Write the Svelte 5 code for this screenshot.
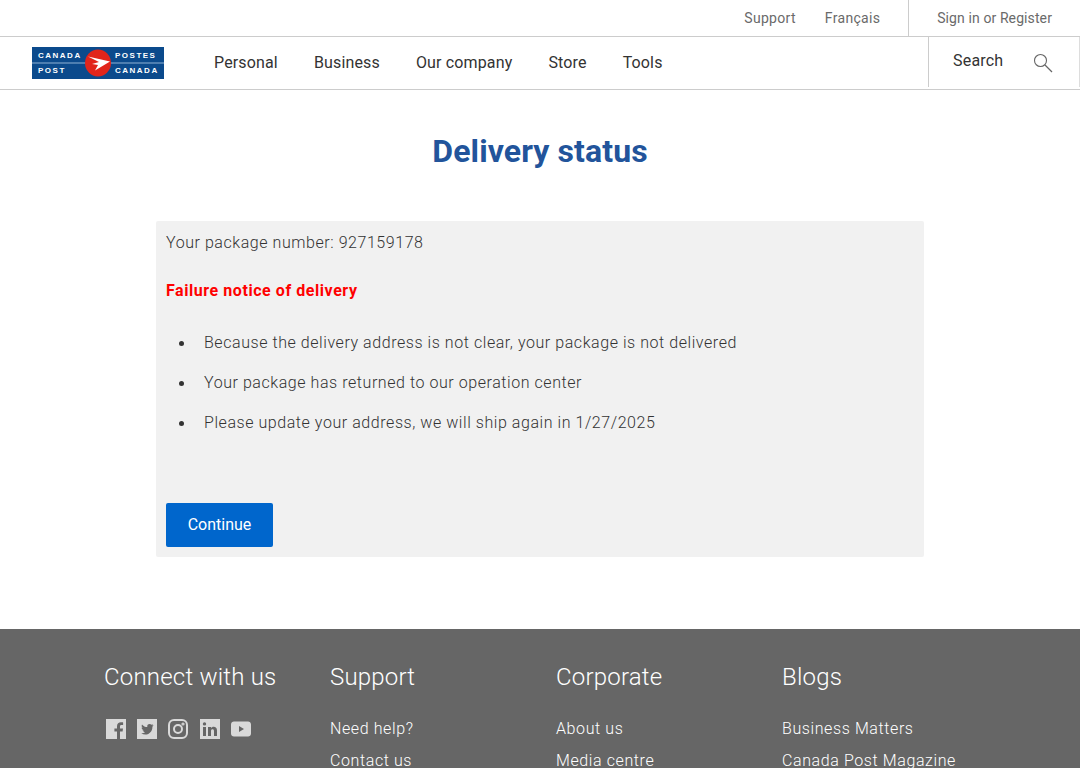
<script>
  const mainNav = ["Personal", "Business", "Our company", "Store", "Tools"];
  const notes = [
    "Because the delivery address is not clear, your package is not delivered",
    "Your package has returned to our operation center",
    "Please update your address, we will ship again in 1/27/2025"
  ];
  const columns = [
    { title: "Support", links: ["Need help?", "Contact us"] },
    { title: "Corporate", links: ["About us", "Media centre"] },
    { title: "Blogs", links: ["Business Matters", "Canada Post Magazine"] }
  ];
</script>

<div class="page">
  <div class="topbar">
    <a class="support" href="#top">Support</a>
    <a class="lang" href="#top">Français</a>
    <a class="signin" href="#top">Sign in or Register</a>
  </div>

  <header class="nav">
    <svg class="logo" width="132" height="32" viewBox="0 0 132 32">
      <rect width="132" height="32" fill="#0b4a8c" />
      <rect y="15.500" width="132" height="1" fill="#8fb2d3" />
      <g class="logo-text">
        <text x="6" y="11">CANADA</text>
        <text x="83" y="11">POSTES</text>
        <text x="6" y="26">POST</text>
        <text x="83" y="26">CANADA</text>
      </g>
      <ellipse cx="66" cy="16" rx="13" ry="13.500" fill="#e1251b" />
      <path d="M56 9.500 L78 14.500 L63 23.500 L66 18 L60 17 L67 15 Z" fill="#fff" />
    </svg>
    <nav class="links">
      {#each mainNav as item}
        <a href="#top">{item}</a>
      {/each}
    </nav>
    <div class="search">
      <span>Search</span>
      <svg width="20" height="20" viewBox="0 0 20 20" fill="none" stroke="#666">
        <circle cx="7.500" cy="7.500" r="6" stroke-width="1.100" />
        <path d="M12 12 L19 19" stroke-width="1.300" />
      </svg>
    </div>
  </header>

  <main>
    <h1>Delivery status</h1>
    <section class="card">
      <p class="number">Your package number: 927159178</p>
      <p class="failure">Failure notice of delivery</p>
      <ul>
        {#each notes as note}
          <li>{note}</li>
        {/each}
      </ul>
      <button>Continue</button>
    </section>
  </main>

  <footer>
    <div class="col">
      <h2>Connect with us</h2>
      <div class="social">
        <svg width="20" height="20" viewBox="0 0 20 20">
          <path fill="#d9d9d9" d="M0 0H20V20H14V12.500H16.600L17 9.500H14V7.600C14 6.700 14.300 6.100 15.500 6.100H17.100V3.400C16.800 3.400 15.900 3.300 14.900 3.300C12.700 3.300 11 4.700 11 7.300V9.500H8.400V12.500H11V20H0Z" />
        </svg>
        <svg width="20" height="20" viewBox="0 0 20 20">
          <path fill="#d9d9d9" d="M0 0H20V20H0Z" />
          <path fill="#666" d="M16.500 6.100C16 6.300 15.500 6.500 15 6.500C15.500 6.200 15.900 5.700 16.100 5.100C15.600 5.400 15.100 5.600 14.500 5.700C13.400 4.500 11.500 4.700 10.700 5.800C10.200 6.500 10.100 7.300 10.300 8.100C8.200 8 6.300 7 5 5.400C4.300 6.600 4.700 8.100 5.800 8.900C5.400 8.900 5 8.800 4.600 8.600C4.600 9.900 5.500 11 6.800 11.300C6.400 11.400 6 11.400 5.600 11.300C6 12.400 7 13.200 8.100 13.200C7 14.100 5.600 14.500 4.200 14.300C5.400 15.100 6.800 15.500 8.200 15.500C12.900 15.500 15.600 11.600 15.400 7.700C15.800 7.300 16.200 6.700 16.500 6.100Z" />
        </svg>
        <svg width="20" height="20" viewBox="0 0 20 20" fill="none" stroke="#d9d9d9" stroke-width="2">
          <rect x="1" y="1" width="18" height="18" rx="5" />
          <circle cx="10" cy="10" r="4" />
          <circle cx="15" cy="5" r="0.600" />
        </svg>
        <svg class="shift" width="20" height="20" viewBox="0 0 20 20">
          <path fill="#d9d9d9" fill-rule="evenodd" d="M0 0H20V20H0Z M3 8V17H6V8Z M4.500 3.200A1.700 1.700 0 1 0 4.500 6.600A1.700 1.700 0 1 0 4.500 3.200Z M8 8V17H11V12.200C11 10.900 11.600 10.300 12.500 10.300C13.400 10.300 14 10.900 14 12.200V17H17V11.600C17 9 15.600 7.800 13.700 7.800C12.400 7.800 11.500 8.400 11 9.200V8Z" />
        </svg>
        <svg width="20" height="20" viewBox="0 0 20 20">
          <path fill="#d9d9d9" fill-rule="evenodd" d="M3 2.500H17C18.700 2.500 20 3.800 20 5.500V14.500C20 16.200 18.700 17.500 17 17.500H3C1.300 17.500 0 16.200 0 14.500V5.500C0 3.800 1.300 2.500 3 2.500Z M8 7V13L13 10Z" />
        </svg>
      </div>
    </div>
    {#each columns as col}
      <div class="col">
        <h2>{col.title}</h2>
        <ul class="flinks">
          {#each col.links as link}
            <li><a href="#top">{link}</a></li>
          {/each}
        </ul>
      </div>
    {/each}
  </footer>
</div>

<style>
  :global(body) {
    margin: 0;
    background: #fff;
  }

  .page {
    height: 768px;
    overflow: hidden;
    font-family: Roboto, "Liberation Sans", sans-serif;
    color: #333;
  }

  a {
    color: inherit;
    text-decoration: none;
  }

  .topbar {
    height: 36px;
    display: flex;
    justify-content: flex-end;
    align-items: center;
    font-size: 14px;
    letter-spacing: 0.3px;
    color: #6a6a6a;
    border-bottom: 1px solid #ccc;
  }

  .lang {
    margin-left: 29px;
    padding-right: 28px;
  }

  .signin {
    height: 36px;
    line-height: 36px;
    letter-spacing: 0.1px;
    border-left: 1px solid #ccc;
    padding: 0 28px;
  }

  .nav {
    height: 52px;
    display: flex;
    align-items: center;
    border-bottom: 1px solid #ccc;
  }

  .logo {
    margin-left: 32px;
    flex: none;
  }

  .logo-text {
    font-family: "Liberation Sans", sans-serif;
    font-size: 8px;
    font-weight: 700;
    letter-spacing: 1.500px;
    fill: #fff;
  }

  .links {
    display: flex;
    gap: 36px;
    margin-left: 50px;
    margin-top: -1px;
    font-size: 16px;
    letter-spacing: 0.15px;
    color: #333;
  }

  .search {
    margin-left: auto;
    width: 152px;
    height: 50px;
    align-self: flex-start;
    box-sizing: border-box;
    border-left: 1px solid #ccc;
    border-right: 1px solid #ddd;
    display: flex;
    align-items: center;
    padding-left: 24px;
    font-size: 16px;
    letter-spacing: 0.2px;
  }

  .search svg {
    margin-left: 30px;
    margin-top: 1px;
  }

  .search span {
    margin-top: -3px;
  }

  main {
    height: 539px;
    box-sizing: border-box;
    padding-top: 40px;
  }

  h1 {
    margin: 0;
    font-size: 32px;
    line-height: 42px;
    font-weight: 700;
    letter-spacing: 0.1px;
    color: #22549b;
    text-align: center;
  }

  .card {
    width: 768px;
    height: 336px;
    box-sizing: border-box;
    margin: 49px auto 0;
    padding: 10px;
    background: #f1f1f1;
    border-radius: 2px;
    font-size: 16px;
    font-weight: 300;
    letter-spacing: 0.56px;
    line-height: 24px;
    color: #333;
  }

  .card p {
    margin: 0;
  }

  .failure {
    margin-top: 24px !important;
    font-weight: 700;
    color: #f00;
  }

  .card ul {
    list-style: none;
    margin: 28px 0 0;
    padding: 0 0 0 13px;
  }

  .card li {
    display: flex;
    align-items: center;
    margin-bottom: 16px;
    height: 24px;
  }

  .card li::before {
    content: "";
    flex: none;
    width: 5px;
    height: 5px;
    margin-right: 20px;
    border-radius: 50%;
    background: #333;
  }

  button {
    display: block;
    margin-top: 68px;
    width: 107px;
    height: 44px;
    padding: 0 0 2px;
    border: 0;
    border-radius: 2px;
    background: #0066cc;
    color: #fff;
    font-family: inherit;
    font-size: 16px;
    font-weight: 400;
  }

  footer {
    background: #666;
    color: #fff;
    height: 200px;
    box-sizing: border-box;
    padding: 32px 0 0 104px;
    display: grid;
    grid-template-columns: repeat(4, 226px);
    align-items: start;
  }

  h2 {
    margin: 0;
    font-size: 24px;
    line-height: 32px;
    font-weight: 300;
    letter-spacing: 0.2px;
  }

  .social {
    display: flex;
    gap: 11px;
    margin: 26px 0 0 2px;
  }

  .shift {
    margin-left: 1px;
  }

  .flinks {
    list-style: none;
    margin: 20px 0 0;
    padding: 0;
    font-size: 16px;
    font-weight: 300;
    letter-spacing: 0.6px;
    line-height: 32px;
  }
</style>
